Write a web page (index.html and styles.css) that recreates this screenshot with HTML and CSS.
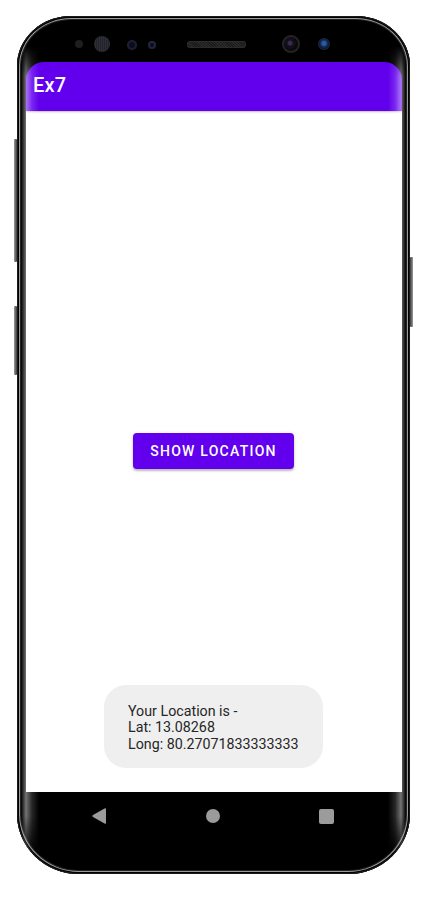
FILE: index.html
```html
<!DOCTYPE html>
<html>
<head>
<meta charset="utf-8">
<link rel="stylesheet" href="styles.css">
</head>
<body>
<div class="phone">
  <div class="btn-side btn-l1"></div>
  <div class="btn-side btn-l2"></div>
  <div class="btn-side btn-r1"></div>
  <div class="bezel">
    <span class="hw dot"></span>
    <span class="hw lens"></span>
    <span class="hw ring1"></span>
    <span class="hw ring2"></span>
    <span class="hw speaker"></span>
    <span class="hw camera"></span>
    <span class="hw blue"></span>
  </div>
  <div class="screen">
    <div class="appbar"><span class="title">Ex7</span></div>
    <div class="content">
      <button class="show-btn">SHOW LOCATION</button>
      <div class="toast">Your Location is -<br>Lat: 13.08268<br>Long: 80.27071833333333</div>
    </div>
    <div class="navbar">
      <svg class="nav-back" width="14" height="16" viewBox="0 0 14 16"><path d="M1 8.9 L12.5 15.6 Q14 16.3 14 14.6 L14 1.4 Q14 -0.3 12.5 0.4 L1 7.1 Q-0.4 8 1 8.9 Z" fill="#9b9b9b"/></svg>
      <span class="nav-home"></span>
      <span class="nav-recent"></span>
    </div>
  </div>
  <div class="edge edge-l"></div>
  <div class="edge edge-r"></div>
</div>
</body>
</html>
```
FILE: styles.css
```css
html, body {
  margin: 0;
  padding: 0;
  background: #ffffff;
}
body {
  width: 428px;
  height: 899px;
  overflow: hidden;
  font-family: Roboto, "Noto Sans", "Liberation Sans", sans-serif;
}
.phone {
  position: relative;
  margin: 16px 0 0 17px;
  width: 393px;
  height: 858px;
  background: #000;
  border-radius: 54px 54px 62px 62px / 50px 50px 60px 60px;
  box-shadow: inset 0 0 0 1px #1a1a1a, inset 0 0 0 2px #000, inset 0 0 0 3px #9a9a9a, inset 0 0 0 4px #222;
  box-sizing: border-box;
}
.btn-side {
  position: absolute;
  width: 3px;
  background: linear-gradient(to right, #9a9a9a, #3a3a3a);
  border-radius: 1px;
}
.btn-l1 { left: -3px; top: 123px; height: 123px; }
.btn-l2 { left: -3px; top: 290px; height: 69px; }
.btn-r1 { right: -3px; top: 241px; height: 70px; background: linear-gradient(to left, #9a9a9a, #3a3a3a); }

.bezel {
  height: 46px;
  box-sizing: border-box;
  padding: 10px 0 0 58px;
  display: flex;
  align-items: flex-start;
}
.hw {
  display: block;
  flex: none;
  border-radius: 50%;
}
.dot { width: 8px; height: 8px; margin-top: 14px; background: #1e1e22; }
.lens {
  width: 16px; height: 16px; margin-left: 11px; margin-top: 10px;
  background: repeating-linear-gradient(to right, #23232b 0 1px, #2e2e38 1px 2px);
}
.ring1 { width: 10px; height: 10px; margin-left: 17px; margin-top: 14px; background: #0c0c1e; box-shadow: inset 0 0 0 2px #1f1f33; }
.ring2 { width: 8px; height: 8px; margin-left: 11px; margin-top: 15px; background: #0c0c1e; box-shadow: inset 0 0 0 2px #24243a; }
.speaker {
  width: 59px; height: 7px; margin-left: 31px; margin-top: 15px;
  border-radius: 4px;
  background: repeating-linear-gradient(45deg, #2a2a2a 0 1px, #1a1a1a 1px 2px);
  box-shadow: inset 0 0 0 1px #2c2c2c;
}
.camera {
  width: 18px; height: 18px; margin-left: 36px; margin-top: 9px;
  background: radial-gradient(circle at 45% 45%, #3a2a50 0 2px, #120f1c 3px 5px, #0a0a0c 6px);
  box-shadow: inset 0 0 0 2px #242424;
}
.blue {
  width: 12px; height: 12px; margin-left: 18px; margin-top: 12px;
  background: radial-gradient(circle at 50% 45%, #2a5aa0 0 2px, #163466 3px, #0b1a33 5px);
  box-shadow: inset 0 0 0 1px #1b2230;
}

.screen {
  margin: 0 8px 0 9px;
  width: 376px;
}
.appbar {
  height: 49px;
  background: #6200ee;
  border-radius: 18px 18px 0 0;
  display: flex;
  align-items: center;
  padding-left: 7px;
  box-sizing: border-box;
  position: relative;
  z-index: 1;
  box-shadow: 0 1px 2px rgba(0,0,0,0.25);
}
.title {
  color: #fff;
  font-size: 20px;
  font-weight: 500;
  letter-spacing: 0.15px;
  margin-top: -4px;
}
.content {
  position: relative;
  height: 681px;
  background: #fff;
  display: flex;
  align-items: center;
  justify-content: center;
}
.show-btn {
  width: 161px;
  height: 36px;
  margin-left: -1px;
  margin-top: -1px;
  border: none;
  border-radius: 4px;
  background: #6200ee;
  color: #fff;
  font-family: Roboto, "Noto Sans", sans-serif;
  font-size: 14px;
  font-weight: 500;
  letter-spacing: 1.25px;
  padding: 0;
  box-shadow: 0 2px 2px rgba(0,0,0,0.2), 0 1px 4px rgba(0,0,0,0.12);
}
.toast {
  position: absolute;
  left: 78px;
  bottom: 24px;
  width: 219px;
  height: 83px;
  box-sizing: border-box;
  padding: 18px 0 0 24px;
  background: #efefef;
  border-radius: 22px;
  color: #262626;
  font-size: 14.25px;
  line-height: 16.3px;
}
.navbar {
  height: 48px;
  display: flex;
  align-items: center;
  padding-left: 66px;
}
.nav-back { display: block; flex: none; }
.nav-home {
  display: block;
  width: 14px; height: 14px;
  border-radius: 50%;
  background: #9b9b9b;
  margin-left: 100px;
}
.nav-recent {
  display: block;
  width: 15px; height: 15px;
  border-radius: 2px;
  background: #9b9b9b;
  margin-left: 99px;
}
.edge {
  position: absolute;
  top: 30px;
  bottom: 18px;
  width: 18px;
  pointer-events: none;
  z-index: 2;
  -webkit-mask-image: linear-gradient(to bottom, transparent 0, #000 30px, #000 calc(100% - 40px), transparent 100%);
  mask-image: linear-gradient(to bottom, transparent 0, #000 30px, #000 calc(100% - 40px), transparent 100%);
}
.edge-l {
  left: 4px;
  background: linear-gradient(to right, rgba(255,255,255,0) 0, rgba(255,255,255,0.45) 5px, rgba(255,255,255,0.15) 11px, rgba(255,255,255,0) 18px);
}
.edge-r {
  right: 4px;
  background: linear-gradient(to left, rgba(255,255,255,0) 0, rgba(255,255,255,0.45) 5px, rgba(255,255,255,0.15) 11px, rgba(255,255,255,0) 18px);
}
```
